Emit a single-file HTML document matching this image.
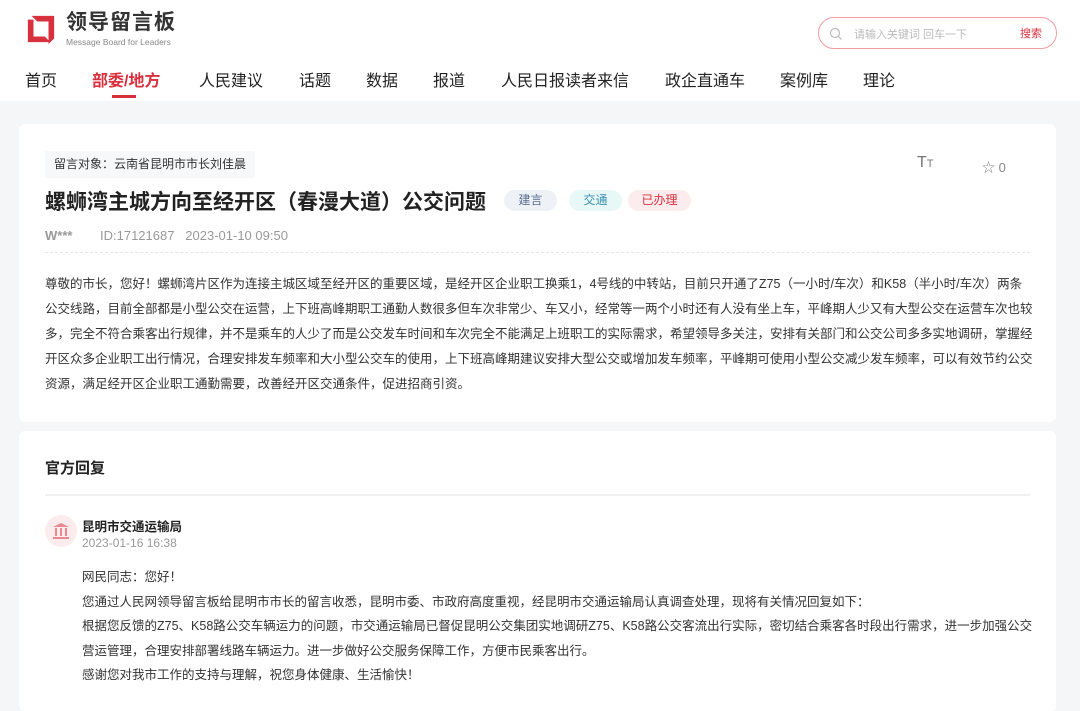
<!DOCTYPE html>
<html><head><meta charset="utf-8"><style>
*{margin:0;padding:0;box-sizing:border-box}
body{width:1080px;height:697px;overflow:hidden;background:#f5f6f8;font-family:"Liberation Sans","Noto Sans CJK SC",sans-serif;color:#333}
.top{background:#fff;height:101px;position:relative}
.logo{position:absolute;left:26px;top:13px}
.logo .t{position:absolute;left:40px;top:-1px;font-size:21px;line-height:22px;font-weight:bold;color:#333;letter-spacing:1px;white-space:nowrap}
.logo .e{position:absolute;left:40px;top:24px;font-size:8.5px;line-height:10px;color:#888;white-space:nowrap}
.search{position:absolute;left:818px;top:17px;width:239px;height:32px;border:1px solid #f59a9f;border-radius:16px}
.search .ph{position:absolute;left:35px;top:8px;font-size:11px;color:#bbb}
.search .b{position:absolute;right:14px;top:7px;font-size:11px;color:#d9303e}
.nav{position:absolute;top:67px;left:0;font-size:16px;color:#222}
.nav span{position:absolute;white-space:nowrap}
.card{position:absolute;left:19px;width:1037px;background:#fff;border-radius:6px}
.tag{position:absolute;left:26px;top:27px;height:27px;padding:0 9px;background:#f7f8fa;font-size:12px;line-height:27px;color:#333;border-radius:2px}
h1{position:absolute;left:26px;top:62px;font-size:21px;font-weight:bold;color:#222;white-space:nowrap}
.pill{position:absolute;top:66px;height:21px;border-radius:11px;font-size:12px;line-height:21px;text-align:center;width:53px}
.meta{position:absolute;top:104px;font-size:13px;color:#999;white-space:nowrap}
.dash{position:absolute;left:26px;right:26px;top:128px;border-top:1px dashed #e5e5e5}
.body{position:absolute;left:26px;font-size:12.5px;line-height:25px;color:#333;white-space:nowrap}
.rp{position:absolute;left:63px;top:134px;font-size:12.5px;line-height:24.5px;color:#333;white-space:nowrap}
</style></head><body>
<div class="top">
 <div class="logo">
  <svg width="30" height="32" viewBox="0 0 32 32" style="position:absolute;left:0;top:0"><path d="M6 2H30V26L24 32V8H12L6 2Z" fill="#d9303e"/><path d="M2 6H8V24H20L26 30H2Z" fill="#d9303e"/></svg>
  <div class="t">领导留言板</div><div class="e">Message Board for Leaders</div>
 </div>
 <div class="search">
  <svg width="14" height="14" viewBox="0 0 14 14" style="position:absolute;left:10px;top:9px"><circle cx="6" cy="6" r="4.5" fill="none" stroke="#bbb" stroke-width="1.2"/><path d="M9.5 9.5L12.5 12.5" stroke="#bbb" stroke-width="1.2"/></svg>
  <span class="ph">请输入关键词 回车一下</span><span class="b">搜索</span>
 </div>
 <div class="nav">
  <span style="left:25px">首页</span>
  <span style="left:92px;color:#d9303e;font-weight:bold">部委/地方</span>
  <span style="left:112px;top:28px;width:24px;height:3px;background:#d9303e"></span>
  <span style="left:199px">人民建议</span>
  <span style="left:299px">话题</span>
  <span style="left:366px">数据</span>
  <span style="left:433px">报道</span>
  <span style="left:501px">人民日报读者来信</span>
  <span style="left:665px">政企直通车</span>
  <span style="left:780px">案例库</span>
  <span style="left:863px">理论</span>
 </div>
</div>
<div class="card" style="top:124px;height:298px">
 <div class="tag">留言对象：云南省昆明市市长刘佳晨</div>
 <div style="position:absolute;left:898px;top:30px;font-size:16px;color:#777">T<span style="font-size:11px">T</span></div>
 <div style="position:absolute;left:963px;top:33px;font-size:13px;color:#888">☆ 0</div>
 <h1>螺蛳湾主城方向至经开区（春漫大道）公交问题</h1>
 <div class="pill" style="left:485px;background:#eef1f6;color:#5a6e90">建言</div>
 <div class="pill" style="left:550px;background:#e8f8f7;color:#3a8fb0">交通</div>
 <div class="pill" style="left:609px;width:63px;background:#fdecee;color:#d9303e">已办理</div>
 <div class="meta" style="left:26px;font-weight:bold">W***</div>
 <div class="meta" style="left:81px">ID:17121687&nbsp;&nbsp;&nbsp;2023-01-10 09:50</div>
 <div class="dash"></div>
 <div class="body" style="top:148px">尊敬的市长，您好！螺蛳湾片区作为连接主城区域至经开区的重要区域，是经开区企业职工换乘1，4号线的中转站，目前只开通了Z75（一小时/车次）和K58（半小时/车次）两条<br>公交线路，目前全部都是小型公交在运营，上下班高峰期职工通勤人数很多但车次非常少、车又小，经常等一两个小时还有人没有坐上车，平峰期人少又有大型公交在运营车次也较<br>多，完全不符合乘客出行规律，并不是乘车的人少了而是公交发车时间和车次完全不能满足上班职工的实际需求，希望领导多关注，安排有关部门和公交公司多多实地调研，掌握经<br>开区众多企业职工出行情况，合理安排发车频率和大小型公交车的使用，上下班高峰期建议安排大型公交或增加发车频率，平峰期可使用小型公交减少发车频率，可以有效节约公交<br>资源，满足经开区企业职工通勤需要，改善经开区交通条件，促进招商引资。</div>
</div>
<div class="card" style="top:431px;height:280px">
 <div style="position:absolute;left:26px;top:26px;font-size:15px;font-weight:bold;color:#222">官方回复</div>
 <div style="position:absolute;left:26px;right:26px;top:63px;height:2px;background:#f0f1f3"></div>
 <div style="position:absolute;left:26px;top:84px;width:32px;height:32px;border-radius:50%;background:#fdecee">
  <svg width="18" height="18" viewBox="0 0 18 18" style="position:absolute;left:7px;top:7px"><path d="M1 5L9 1L17 5Z" fill="#e88a90"/><rect x="1" y="15" width="16" height="2" fill="#e88a90"/><rect x="3" y="6" width="2" height="8" fill="#e88a90"/><rect x="8" y="6" width="2" height="8" fill="#e88a90"/><rect x="13" y="6" width="2" height="8" fill="#e88a90"/></svg>
 </div>
 <div style="position:absolute;left:63px;top:85px;font-size:12.5px;font-weight:bold;color:#222">昆明市交通运输局</div>
 <div style="position:absolute;left:63px;top:105px;font-size:12px;color:#999">2023-01-16 16:38</div>
 <div class="rp">网民同志：您好！<br>您通过人民网领导留言板给昆明市市长的留言收悉，昆明市委、市政府高度重视，经昆明市交通运输局认真调查处理，现将有关情况回复如下：<br>根据您反馈的Z75、K58路公交车辆运力的问题，市交通运输局已督促昆明公交集团实地调研Z75、K58路公交客流出行实际，密切结合乘客各时段出行需求，进一步加强公交<br>营运管理，合理安排部署线路车辆运力。进一步做好公交服务保障工作，方便市民乘客出行。<br>感谢您对我市工作的支持与理解，祝您身体健康、生活愉快！</div>
</div>
</body></html>
